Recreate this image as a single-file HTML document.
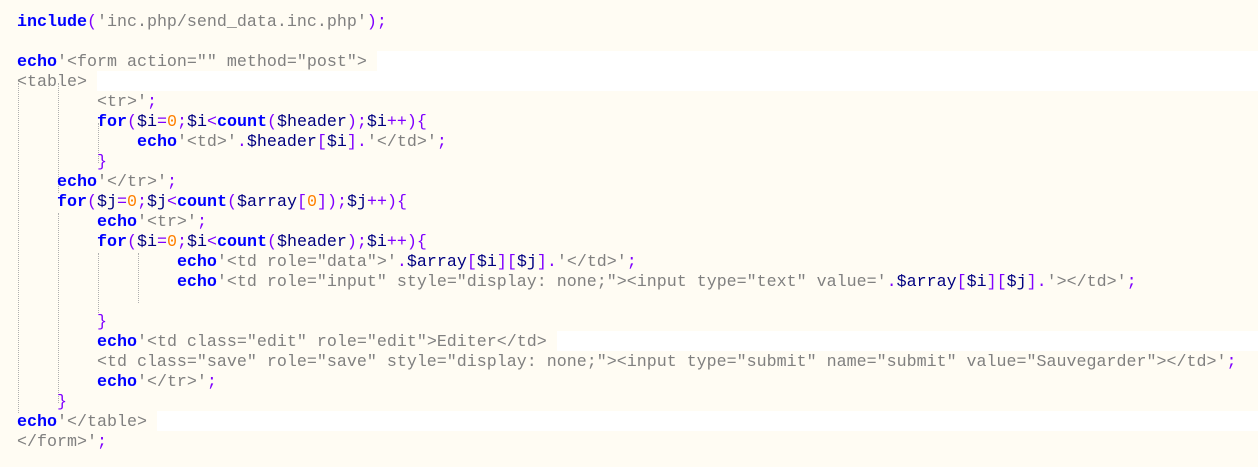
<!DOCTYPE html>
<html><head><meta charset="utf-8"><style>
html,body{margin:0;padding:0;background:#fffcf3;width:1258px;height:467px;overflow:hidden;position:relative}
pre{position:absolute;left:17px;top:13px;margin:0;font-family:"Liberation Mono",monospace;font-size:16.67px;line-height:20px;color:#808080;z-index:2}
.k{color:#0000ff;font-weight:bold}.p{color:#8000ff}.n{color:#ff8000}.v{color:#000080}
.w{position:absolute;background:#fff;height:20px;right:0}
.g{position:absolute;border-left:1px dotted #b0b0b0;width:0}
</style></head><body>
<div class="w" style="top:51px;left:377px"></div>
<div class="w" style="top:71px;left:97px"></div>
<div class="w" style="top:331px;left:557px"></div>
<div class="w" style="top:411px;left:157px"></div>
<div class="g" style="left:18px;top:83px;height:330px"></div>
<div class="g" style="left:58px;top:83px;height:110px"></div>
<div class="g" style="left:58px;top:213px;height:190px"></div>
<div class="g" style="left:98px;top:123px;height:40px"></div>
<div class="g" style="left:98px;top:253px;height:60px"></div>
<div class="g" style="left:138px;top:253px;height:50px"></div>
<pre><span class="k">include</span><span class="p">(</span>'inc.php/send_data.inc.php'<span class="p">);</span>

<span class="k">echo</span>'&lt;form action="" method="post"&gt;
&lt;table&gt;
        &lt;tr&gt;'<span class="p">;</span>
        <span class="k">for</span><span class="p">(</span><span class="v">$i</span><span class="p">=</span><span class="n">0</span><span class="p">;</span><span class="v">$i</span><span class="p">&lt;</span><span class="k">count</span><span class="p">(</span><span class="v">$header</span><span class="p">);</span><span class="v">$i</span><span class="p">++){</span>
            <span class="k">echo</span>'&lt;td&gt;'<span class="p">.</span><span class="v">$header</span><span class="p">[</span><span class="v">$i</span><span class="p">].</span>'&lt;/td&gt;'<span class="p">;</span>
        <span class="p">}</span>
    <span class="k">echo</span>'&lt;/tr&gt;'<span class="p">;</span>
    <span class="k">for</span><span class="p">(</span><span class="v">$j</span><span class="p">=</span><span class="n">0</span><span class="p">;</span><span class="v">$j</span><span class="p">&lt;</span><span class="k">count</span><span class="p">(</span><span class="v">$array</span><span class="p">[</span><span class="n">0</span><span class="p">]);</span><span class="v">$j</span><span class="p">++){</span>
        <span class="k">echo</span>'&lt;tr&gt;'<span class="p">;</span>
        <span class="k">for</span><span class="p">(</span><span class="v">$i</span><span class="p">=</span><span class="n">0</span><span class="p">;</span><span class="v">$i</span><span class="p">&lt;</span><span class="k">count</span><span class="p">(</span><span class="v">$header</span><span class="p">);</span><span class="v">$i</span><span class="p">++){</span>
                <span class="k">echo</span>'&lt;td role="data"&gt;'<span class="p">.</span><span class="v">$array</span><span class="p">[</span><span class="v">$i</span><span class="p">][</span><span class="v">$j</span><span class="p">].</span>'&lt;/td&gt;'<span class="p">;</span>
                <span class="k">echo</span>'&lt;td role="input" style="display: none;"&gt;&lt;input type="text" value='<span class="p">.</span><span class="v">$array</span><span class="p">[</span><span class="v">$i</span><span class="p">][</span><span class="v">$j</span><span class="p">].</span>'&gt;&lt;/td&gt;'<span class="p">;</span>

        <span class="p">}</span>
        <span class="k">echo</span>'&lt;td class="edit" role="edit"&gt;Editer&lt;/td&gt;
        &lt;td class="save" role="save" style="display: none;"&gt;&lt;input type="submit" name="submit" value="Sauvegarder"&gt;&lt;/td&gt;'<span class="p">;</span>
        <span class="k">echo</span>'&lt;/tr&gt;'<span class="p">;</span>
    <span class="p">}</span>
<span class="k">echo</span>'&lt;/table&gt;
&lt;/form&gt;'<span class="p">;</span></pre>
</body></html>
